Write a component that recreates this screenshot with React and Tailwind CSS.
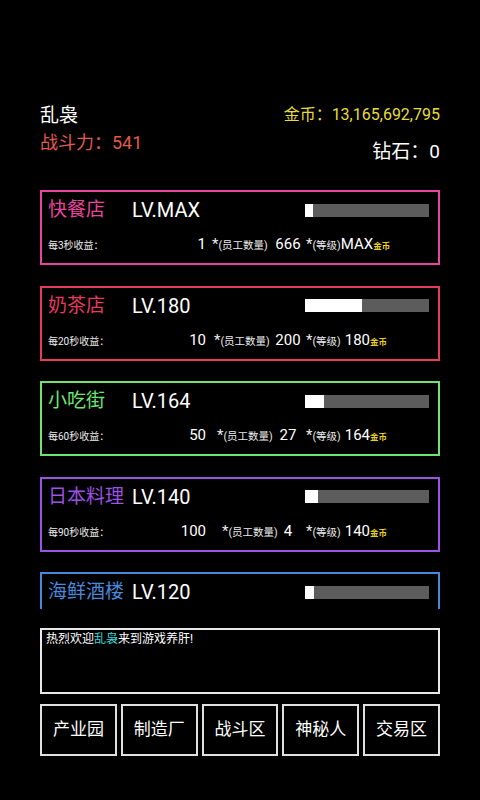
import React from "react";

const cards = [
  { name: "快餐店", lv: "LV.MAX", color: "text-[#e8469e]", border: "border-[#e8469e]", fill: 8, label: "每3秒收益：", n1: "1", pad: "pl-[6px]", n2: "666", gap: "ml-[0px]", val: "MAX" },
  { name: "奶茶店", lv: "LV.180", color: "text-[#e63a5e]", border: "border-[#e63a5e]", fill: 57, label: "每20秒收益：", n1: "10", pad: "pl-[8px]", n2: "200", gap: "ml-[4px]", val: "180" },
  { name: "小吃街", lv: "LV.164", color: "text-[#6ee46e]", border: "border-[#6ee46e]", fill: 19, label: "每60秒收益：", n1: "50", pad: "pl-[11px]", n2: "27", gap: "ml-[4px]", val: "164" },
  { name: "日本料理", lv: "LV.140", color: "text-[#9c52e2]", border: "border-[#9c52e2]", fill: 13, label: "每90秒收益：", n1: "100", pad: "pl-[16px]", n2: "4", gap: "ml-[4px]", val: "140" },
  { name: "海鲜酒楼", lv: "LV.120", color: "text-[#4a88dc]", border: "border-[#4a88dc]", fill: 9, label: "每120秒收益：", n1: "200", pad: "pl-[16px]", n2: "2", gap: "ml-[4px]", val: "120" },
];

function Card({ c }) {
  return (
    <div className={`h-[75px] shrink-0 border-2 ${c.border} pl-[6px] pr-[9px] flex flex-col`}>
      <div className="h-[28px] mt-[4px] flex items-center whitespace-nowrap">
        <span className={`w-[84px] shrink-0 text-[19px] leading-[28px] ${c.color}`}>{c.name}</span>
        <span className="text-[20px] leading-[28px] text-white">{c.lv}</span>
        <div className="ml-auto w-[124px] shrink-0 h-[13px] bg-[#5c5c5c]">
          <div className="h-full bg-white" style={{ width: c.fill }} />
        </div>
      </div>
      <div className="h-[20px] mt-[9px] flex items-baseline text-[#ececec] whitespace-nowrap">
        <span className="w-[120px] shrink-0 text-[10px]">{c.label}</span>
        <span className="w-[38px] shrink-0 text-right text-[15px] text-white">{c.n1}</span>
        <span className={`w-[64px] shrink-0 ${c.pad} text-[15px]`}>
          *<span className="text-[10.5px]">(员工数量)</span>
        </span>
        <span className="w-[36px] shrink-0 text-center text-[15px] text-white">{c.n2}</span>
        <span className="shrink-0 text-[15px]">
          *<span className="text-[10.5px]">(等级)</span>
        </span>
        <span className={`${c.gap} shrink-0 text-[15px] text-white`}>
          {c.val}
          <span className="text-[8.5px] font-bold text-[#e8d020]">金币</span>
        </span>
      </div>
    </div>
  );
}

export default function App() {
  return (
    <div className="h-[800px] w-full bg-black text-white overflow-hidden px-[40px] flex flex-col font-['Roboto','Noto_Sans_CJK_SC',sans-serif]">
      <div className="pt-[104px] flex justify-between">
        <div className="flex flex-col">
          <span className="text-[19px] leading-[24px]">乱袅</span>
          <span className="mt-[4px] text-[18px] leading-[22px] text-[#e05a4e]">战斗力：541</span>
        </div>
        <div className="flex flex-col items-end">
          <span className="text-[16px] leading-[22px] text-[#e6dc3c]">金币：13,165,692,795</span>
          <span className="mt-[14px] text-[19px] leading-[24px]">钻石：0</span>
        </div>
      </div>

      <div className="mt-[26px] h-[419px] shrink-0 overflow-hidden flex flex-col gap-[20.5px]">
        {cards.map((c) => (
          <Card key={c.name} c={c} />
        ))}
      </div>

      <div className="mt-[19px] h-[66px] shrink-0 border-2 border-[#e8e8e8] px-[4px] pt-[1px] text-[12px] leading-[16px]">
        热烈欢迎<span className="text-[#3cd8d8]">乱袅</span>来到游戏养肝!
      </div>

      <div className="mt-[10px] grid grid-cols-5 gap-[4px]">
        {["产业园", "制造厂", "战斗区", "神秘人", "交易区"].map((t) => (
          <div key={t} className="h-[52px] border-2 border-[#e0e0e0] flex items-center justify-center text-[17px]">
            {t}
          </div>
        ))}
      </div>
    </div>
  );
}
